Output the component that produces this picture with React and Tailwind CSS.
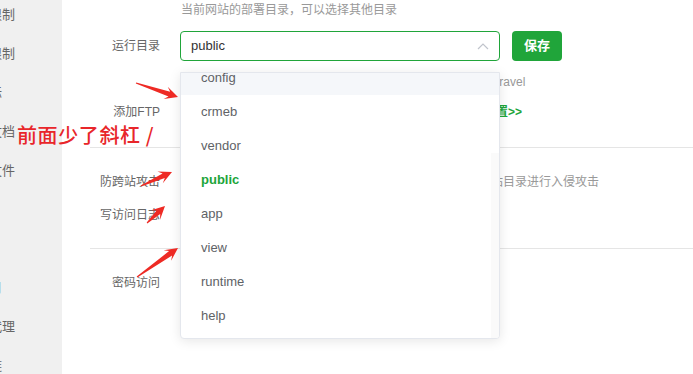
const FONT = "font-['Liberation_Sans','Noto_Sans_CJK_SC',sans-serif]";

const sideItems = ["访问限制", "流量限制", "站点标", "默认文档", "配置文件", "SSL", "PHP", "IP访问", "反向代理", "防盗链"];

const dirs = ["config", "crmeb", "vendor", "public", "app", "view", "runtime", "help"];

// tapered screenshot-style arrow, from tail to tip
function arrowPoints([x1, y1], [x2, y2]) {
  const len = Math.hypot(x2 - x1, y2 - y1);
  const dx = (x2 - x1) / len;
  const dy = (y2 - y1) / len;
  const nx = -dy;
  const ny = dx;
  const L = 13;
  const W = 6.5;
  const neck = [x2 - dx * L * 0.7, y2 - dy * L * 0.7];
  const wing = [x2 - dx * L, y2 - dy * L];
  const pts = [
    [x1 + nx * 0.5, y1 + ny * 0.5],
    [neck[0] + nx * 2.6, neck[1] + ny * 2.6],
    [wing[0] + nx * W, wing[1] + ny * W],
    [x2, y2],
    [wing[0] - nx * W, wing[1] - ny * W],
    [neck[0] - nx * 2.6, neck[1] - ny * 2.6],
    [x1 - nx * 0.5, y1 - ny * 0.5],
  ];
  return pts.map((p) => p.map((v) => v.toFixed(1)).join(",")).join(" ");
}

const arrows = [
  [[136, 83], [178, 97]],
  [[141, 186], [172, 172]],
  [[147, 223], [165, 206]],
  [[137, 277], [178, 248]],
];

function Row({ label, children, className = "" }) {
  return (
    <div className={`flex items-center h-[30px] ${className}`}>
      <div className="w-[98px] text-right text-[12px] text-[#666]">{label}</div>
      <div className="ml-[20px] flex items-center">{children}</div>
    </div>
  );
}

export default function App() {
  return (
    <div className={`relative flex w-[693px] h-[374px] overflow-hidden bg-white ${FONT}`}>
      {/* 侧边菜单（被裁切） */}
      <aside className="w-[62px] shrink-0 bg-[#f0f0f0] overflow-hidden">
        <div className="-mt-[5px]">
          {sideItems.map((t, i) => (
            <div key={i} className="h-[39px] flex items-center -ml-[37px] whitespace-nowrap text-[13px] text-[#666]">
              {t}
            </div>
          ))}
        </div>
      </aside>

      {/* 内容 */}
      <main className="flex-1 flex flex-col">
        <div className="h-[20px] flex items-center pl-[119px] text-[12px] text-[#999] whitespace-nowrap">
          当前网站的部署目录，可以选择其他目录
        </div>

        <Row label="运行目录" className="mt-[11px]">
          <div className="w-[320px] h-[30px] border border-[#20a53a] rounded-[4px] flex items-center justify-between pl-[10px] pr-[10px]">
            <span className="text-[13px] text-[#333]">public</span>
            <svg width="12" height="8" viewBox="0 0 12 8">
              <polyline points="1,7 6,2 11,7" fill="none" stroke="#c0c4cc" strokeWidth="1.2" />
            </svg>
          </div>
          <button className="ml-[12px] w-[50px] h-[30px] rounded-[4px] bg-[#20a53a] text-white text-[13px] font-bold">
            保存
          </button>
        </Row>

        <div className="mt-[11px] h-[20px] flex items-center pl-[120px] text-[12px] text-[#999] whitespace-nowrap">
          部分程序需要指定二级目录作为运行目录，如ThinkPHP5,Laravel
        </div>

        <Row label="添加FTP" className="mt-[5px]">
          <span className="w-[304px] text-[12px] text-[#999] whitespace-nowrap overflow-hidden">当前网站未创建FTP账号</span>
          <span className="text-[12px] font-bold text-[#20a53a] whitespace-nowrap">设置&gt;&gt;</span>
        </Row>

        <div className="mt-[20px] ml-[28px] h-px bg-[#e5e5e5]" />

        <Row label="防跨站攻击" className="mt-[19px]">
          <span className="w-[36px] h-[18px] rounded-full bg-[#20a53a]" />
          <span className="ml-[167px] text-[12px] text-[#999] whitespace-nowrap">防止黑客通过其他网站目录进行入侵攻击</span>
        </Row>

        <Row label="写访问日志" className="mt-[3px]">
          <span className="w-[36px] h-[18px] rounded-full bg-[#20a53a]" />
        </Row>

        <div className="mt-[18px] ml-[28px] h-px bg-[#e5e5e5]" />

        <Row label="密码访问" className="mt-[19px]">
          <span className="w-[36px] h-[18px] rounded-full bg-[#ddd]" />
        </Row>
      </main>

      {/* 下拉菜单 */}
      <div className="absolute left-[180px] top-[72px] w-[320px] h-[267px] bg-white border border-[#e4e7ed] rounded-b-[4px] shadow-[0_2px_12px_rgba(0,0,0,0.1)] overflow-hidden">
        <div className="-mt-[12px]">
          {dirs.map((d) => (
            <div
              key={d}
              className={`h-[34px] flex items-center pl-[20px] text-[13px] ${
                d === "config" ? "bg-[#f5f7fa] text-[#606266]" : d === "public" ? "text-[#20a53a] font-bold" : "text-[#606266]"
              }`}
            >
              {d}
            </div>
          ))}
        </div>
        <div className="absolute right-0 top-[80px] bottom-0 w-[8px] bg-[#fafafa]" />
      </div>

      {/* 标注 */}
      <div className="absolute left-[17px] top-[124px] text-[20px] leading-[22px] tracking-[0.6px] font-medium text-[#e8262a] whitespace-nowrap font-['Noto_Sans_CJK_SC',sans-serif]">
        前面少了斜杠 /
      </div>
      <svg className="absolute inset-0 pointer-events-none" width="693" height="374">
        {arrows.map(([a, b], i) => (
          <polygon key={i} points={arrowPoints(a, b)} fill="#ee2a24" />
        ))}
      </svg>
    </div>
  );
}
